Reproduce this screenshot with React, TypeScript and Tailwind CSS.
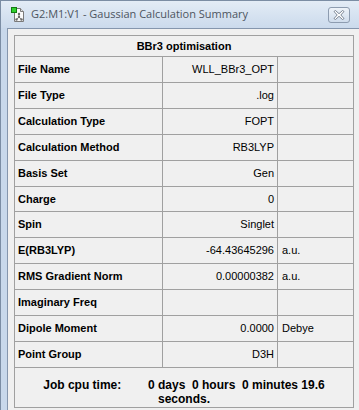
import React from "react";

interface Row {
  label: string;
  value: string;
  unit?: string;
  h?: string;
}

const ROWS: Row[] = [
  { label: "File Name", value: "WLL_BBr3_OPT" },
  { label: "File Type", value: ".log" },
  { label: "Calculation Type", value: "FOPT" },
  { label: "Calculation Method", value: "RB3LYP" },
  { label: "Basis Set", value: "Gen" },
  { label: "Charge", value: "0", h: "h-[25px]" },
  { label: "Spin", value: "Singlet" },
  { label: "E(RB3LYP)", value: "-64.43645296", unit: "a.u." },
  { label: "RMS Gradient Norm", value: "0.00000382", unit: "a.u." },
  { label: "Imaginary Freq", value: "" },
  { label: "Dipole Moment", value: "0.0000", unit: "Debye" },
  { label: "Point Group", value: "D3H" },
];

const GaussIcon = () => (
  <svg width="14" height="16" viewBox="0 0 14 16">
    <path d="M3.5 1.5h6l3 3v10h-9z" fill="#fafafa" stroke="#7a7a7a" />
    <path d="M9.5 1.5v3h3" fill="#e0e0e0" stroke="#7a7a7a" />
    <line x1="8" y1="7" x2="8" y2="10" stroke="#8a8a8a" />
    <line x1="8" y1="10" x2="5.5" y2="12.5" stroke="#8a8a8a" />
    <line x1="8" y1="10" x2="10.5" y2="12.5" stroke="#8a8a8a" />
    <circle cx="8" cy="7" r="1.2" fill="#6a6a6a" />
    <circle cx="8" cy="10" r="1.2" fill="#6a6a6a" />
    <circle cx="5.5" cy="12.5" r="1.2" fill="#6a6a6a" />
    <circle cx="10.5" cy="12.5" r="1.2" fill="#6a6a6a" />
    <rect x="0.5" y="0.5" width="5" height="5" fill="#2fd02f" stroke="#137a13" />
  </svg>
);

const CloseGlyph = () => (
  <svg width="12" height="10" viewBox="0 0 12 10">
    <path
      d="M1 1.5L4.2 5 1 8.5 2.5 9.5 6 6.3 9.5 9.5 11 8.5 7.8 5 11 1.5 9.5.5 6 3.7 2.5.5z"
      fill="#ffffff"
      stroke="#6f7b8a"
      strokeWidth="0.9"
      strokeLinejoin="round"
    />
  </svg>
);

export default function App() {
  return (
    <div
      className="w-[359px] h-[410px] overflow-hidden flex flex-col bg-[#c8d8eb] border-t border-l border-[#7b8da4]"
      style={{ fontFamily: '"Liberation Sans", Arial, sans-serif' }}
    >
      {/* Title bar */}
      <div className="h-[27px] shrink-0 flex items-center pl-[10px] bg-gradient-to-b from-[#e3ecf6] to-[#cbdaec]">
        <GaussIcon />
        <span
          className="ml-[6px] text-[11px] text-[#4d5560]"
          style={{ fontFamily: '"Open Sans", sans-serif' }}
        >
          G2:M1:V1 - Gaussian Calculation Summary
        </span>
        <div className="ml-auto mr-[9px] w-[22px] h-[16px] rounded-[3px] border border-[#8d9cb0] bg-gradient-to-b from-[#eef3f9] to-[#cfdcec] flex items-center justify-center">
          <CloseGlyph />
        </div>
      </div>

      {/* Body */}
      <div className="flex-1 flex pl-[6px]">
        <div className="flex-1 bg-[#f0f0f0] border-l border-t border-[#8596ad] pl-[6px] pt-[6px]">
          <div className="w-[340px] border-x border-t border-[#a0a0a0] bg-[#f0f0f0] text-[11px] text-black">
            <div className="h-[21px] border-b border-[#a0a0a0] flex items-center justify-center font-bold">
              BBr3 optimisation
            </div>
            {ROWS.map((r, i) => (
              <div key={i} className={`${r.h ?? "h-[26px]"} flex border-b border-[#a0a0a0]`}>
                <div className="w-[148px] border-r border-[#a0a0a0] flex items-center pl-[3px] font-bold">
                  {r.label}
                </div>
                <div className="w-[115px] border-r border-[#a0a0a0] flex items-center justify-end pr-[3px]">
                  {r.value}
                </div>
                <div className="w-[75px] flex items-center pl-[4px]">{r.unit}</div>
              </div>
            ))}
            <div className="h-[40px] border-b border-[#a0a0a0] flex flex-col items-center pt-[10px] font-bold text-[12px] leading-[14px]">
              <div className="whitespace-pre">{"Job cpu time:        0 days  0 hours  0 minutes 19.6"}</div>
              <div>seconds.</div>
            </div>
          </div>
        </div>
      </div>
    </div>
  );
}
